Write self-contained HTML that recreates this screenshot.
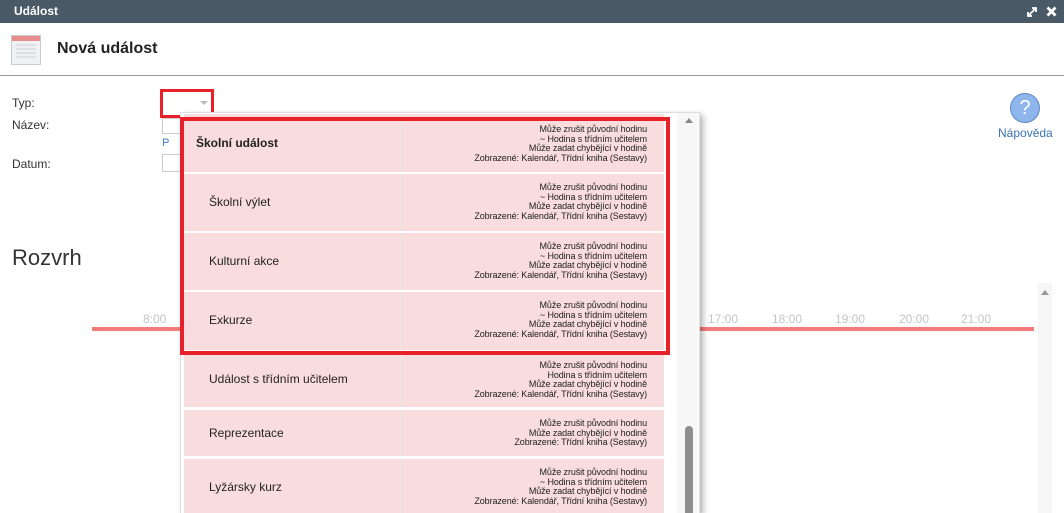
<!DOCTYPE html>
<html style="overflow:hidden;height:513px"><head><meta charset="utf-8"><style>
*{margin:0;padding:0;box-sizing:border-box}
body{width:1064px;height:513px;overflow:hidden;background:#fff;font-family:"Liberation Sans",sans-serif;position:relative;color:#222}
.abs{position:absolute}
.row{position:absolute;left:184px;width:480px;background:#f9dcdd}
.row .n{position:absolute;left:25px;font-size:12px;color:#222}
.row .d{position:absolute;left:216px;top:0;bottom:0;border-left:1px solid #e8e8e8}
.row .r{position:absolute;right:17px;font-size:9px;line-height:9.6px;text-align:right;color:#222;white-space:nowrap;letter-spacing:-0.1px}
.h{position:absolute;top:312px;font-size:12px;color:#c4c4c4}
</style></head><body>
<div class="abs" style="left:0;top:0;width:1064px;height:23px;background:#4a5966"></div>
<div class="abs" style="left:14px;top:4px;color:#fff;font-weight:bold;font-size:12px">Událost</div>
<svg class="abs" style="left:1026px;top:6px" width="12" height="12" viewBox="0 0 12 12"><path d="M2 10L10 2M6 2h4v4M2 6v4h4" stroke="#fff" stroke-width="1.8" fill="none"/></svg>
<svg class="abs" style="left:1046px;top:6px" width="11" height="11" viewBox="0 0 11 11"><path d="M1.5 1.5L9.5 9.5M9.5 1.5L1.5 9.5" stroke="#fff" stroke-width="2.8"/></svg>
<div class="abs" style="left:11px;top:35px;width:30px;height:30px;border:1px solid #c8ccd2;background:#f0f1f4"></div>
<div class="abs" style="left:12px;top:36px;width:28px;height:5px;background:#e88c8c"></div>
<div class="abs" style="left:16px;top:44px;width:20px;height:14px;background:repeating-linear-gradient(0deg,#dde0e5 0 2px,transparent 2px 4px)"></div>
<div class="abs" style="left:57px;top:40px;font-size:16px;font-weight:bold;color:#222">Nová událost</div>
<div class="abs" style="left:0;top:75px;width:1064px;height:1px;background:#999"></div>
<div class="abs" style="left:12px;top:96px;font-size:12px;color:#333">Typ:</div>
<div class="abs" style="left:12px;top:118px;font-size:12px;color:#333">Název:</div>
<div class="abs" style="left:12px;top:157px;font-size:12px;color:#333">Datum:</div>
<div class="abs" style="left:162px;top:118px;width:20px;height:16px;border:1px solid #ccc"></div>
<div class="abs" style="left:162px;top:154px;width:20px;height:18px;border:1px solid #ccc"></div>
<div class="abs" style="left:162px;top:137px;font-size:11px;color:#3a7bbf">P</div>
<div class="abs" style="left:160px;top:89px;width:54px;height:29px;border:3px solid #e8202a"></div>
<div class="abs" style="left:200px;top:101px;width:0;height:0;border-left:4px solid transparent;border-right:4px solid transparent;border-top:4px solid #bbb"></div>
<div class="abs" style="left:12px;top:245px;font-size:22px;color:#333">Rozvrh</div>
<div class="abs" style="left:1010px;top:93px;width:30px;height:30px;border-radius:50%;background:#8fb6ec;border:1px solid #5e86c4;color:#fff;font-size:20px;text-align:center;line-height:28px">?</div>
<div class="abs" style="left:998px;top:126px;font-size:12px;color:#3a74b4">Nápověda</div>
<div class="abs" style="left:92px;top:327px;width:942px;height:4px;background:#f47b7b"></div>
<div class="h" style="left:143px">8:00</div>
<div class="h" style="left:708px">17:00</div>
<div class="h" style="left:772px">18:00</div>
<div class="h" style="left:835px">19:00</div>
<div class="h" style="left:899px">20:00</div>
<div class="h" style="left:961px">21:00</div>
<div class="abs" style="left:1038px;top:283px;width:14px;height:230px;background:#f6f6f6"></div>
<div class="abs" style="left:1041px;top:290px;border-left:4px solid transparent;border-right:4px solid transparent;border-bottom:5px solid #999"></div>
<div class="abs" style="left:180px;top:112px;width:520px;height:401px;background:#fff;border:1px solid #ddd;border-bottom:none;box-shadow:3px 3px 6px rgba(0,0,0,.3);overflow:hidden"></div>
<div class="abs" style="left:677px;top:113px;width:21px;height:400px;background:#f7f7f7"></div>
<div class="abs" style="left:685px;top:118px;border-left:4px solid transparent;border-right:4px solid transparent;border-bottom:5px solid #888"></div>
<div class="abs" style="left:685px;top:426px;width:8px;height:87px;border-radius:4px 4px 0 0;background:#8e8e8e"></div>

<div class="row" style="top:114px;height:58px"><div class="n" style="left:12px;top:22px;font-weight:bold">Školní událost</div><div class="d"></div><div class="r" style="top:11px">Může zrušit původní hodinu<br>~ Hodina s třídním učitelem<br>Může zadat chybějící v hodině<br>Zobrazené: Kalendář, Třídní kniha (Sestavy)</div></div>
<div class="row" style="top:174px;height:57px"><div class="n" style="top:21px">Školní výlet</div><div class="d"></div><div class="r" style="top:9px">Může zrušit původní hodinu<br>~ Hodina s třídním učitelem<br>Může zadat chybějící v hodině<br>Zobrazené: Kalendář, Třídní kniha (Sestavy)</div></div>
<div class="row" style="top:233px;height:57px"><div class="n" style="top:21px">Kulturní akce</div><div class="d"></div><div class="r" style="top:9px">Může zrušit původní hodinu<br>~ Hodina s třídním učitelem<br>Může zadat chybějící v hodině<br>Zobrazené: Kalendář, Třídní kniha (Sestavy)</div></div>
<div class="row" style="top:292px;height:58px"><div class="n" style="top:21px">Exkurze</div><div class="d"></div><div class="r" style="top:9px">Může zrušit původní hodinu<br>~ Hodina s třídním učitelem<br>Může zadat chybějící v hodině<br>Zobrazené: Kalendář, Třídní kniha (Sestavy)</div></div>
<div class="row" style="top:352px;height:55px"><div class="n" style="top:20px">Událost s třídním učitelem</div><div class="d"></div><div class="r" style="top:9px">Může zrušit původní hodinu<br>Hodina s třídním učitelem<br>Může zadat chybějící v hodině<br>Zobrazené: Kalendář, Třídní kniha (Sestavy)</div></div>
<div class="row" style="top:410px;height:46px"><div class="n" style="top:16px">Reprezentace</div><div class="d"></div><div class="r" style="top:9px">Může zrušit původní hodinu<br>Může zadat chybějící v hodině<br>Zobrazené: Třídní kniha (Sestavy)</div></div>
<div class="row" style="top:459px;height:54px"><div class="n" style="top:21px">Lyžársky kurz</div><div class="d"></div><div class="r" style="top:9px">Může zrušit původní hodinu<br>~ Hodina s třídním učitelem<br>Může zadat chybějící v hodině<br>Zobrazené: Kalendář, Třídní kniha (Sestavy)</div></div>

<div class="abs" style="left:180px;top:117px;width:490px;height:238px;border:4px solid #e8202a"></div>
</body></html>
